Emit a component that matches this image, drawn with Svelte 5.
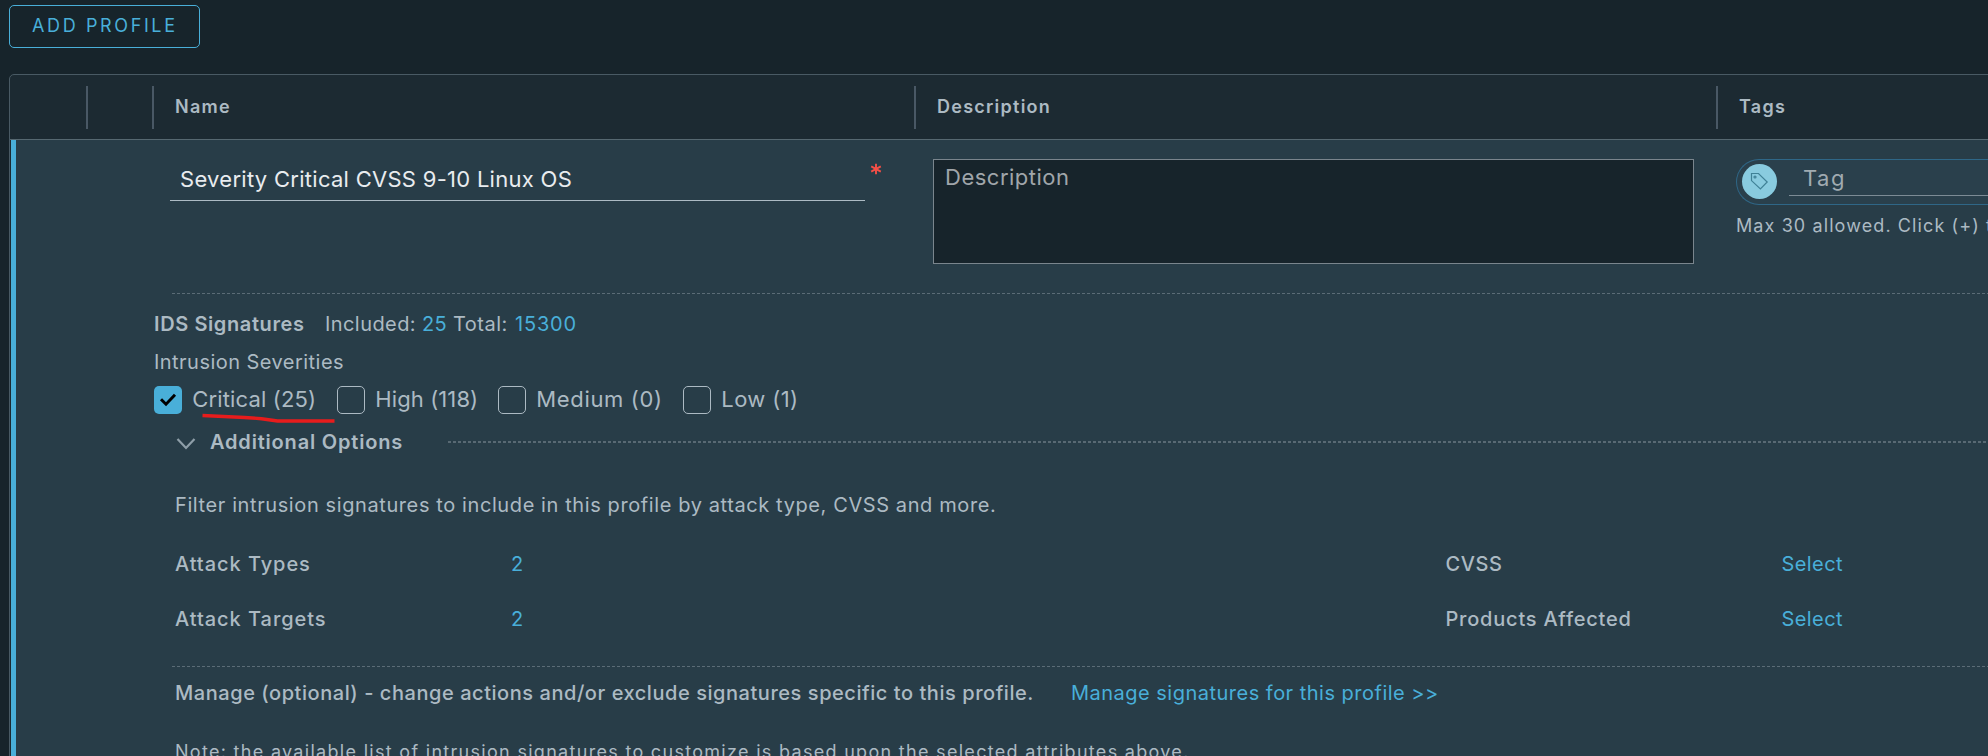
<script>
  const severities = [
    { label: 'Critical (25)', checked: true, width: 183, spacing: 0.15 },
    { label: 'High (118)', checked: false, width: 161, spacing: 0.1 },
    { label: 'Medium (0)', checked: false, width: 185, spacing: 0.65 },
    { label: 'Low (1)', checked: false, width: 160, spacing: 0.4 }
  ];
  const criteria = [
    [{ label: 'Attack Types', value: '2', ls: 0.94 }, { label: 'CVSS', value: 'Select', ls: 0.6 }],
    [{ label: 'Attack Targets', value: '2', ls: 0.96 }, { label: 'Products Affected', value: 'Select', ls: 0.78 }]
  ];
</script>

<main>
  <button class="add">ADD PROFILE</button>

  <section class="grid">
    <header class="head">
      <div class="cell c1"></div>
      <div class="cell c2"></div>
      <div class="cell c3">Name</div>
      <div class="cell c4">Description</div>
      <div class="cell c5">Tags</div>
    </header>

    <div class="row">
      <div class="fields">
        <div class="name-input">Severity Critical CVSS 9-10 Linux OS</div>
        <svg class="star" width="12" height="12" viewBox="0 0 12 12"><path d="M6 .8v10.4M1.2 3.4l9.6 5.2M10.8 3.4L1.2 8.6" /></svg>
        <div class="desc">Description</div>
        <div class="tags">
          <div class="pill">
            <span class="dot">
              <svg width="19" height="19" viewBox="0 0 19 19"><path d="M1.5 1.5h7l8.7 8.5-6.8 7L1.5 8.6z" /><circle cx="5" cy="5" r="1" /></svg>
            </span>
            <span class="tag-input">Tag</span>
          </div>
          <div class="hint">Max 30 allowed. Click (+) t</div>
        </div>
      </div>

      <div class="rule"></div>

      <div class="summary">
        <strong>IDS Signatures</strong>
        <span class="k1">Included:</span><a class="n1">25</a>
        <span class="k2">Total:</span><a class="n2">15300</a>
      </div>
      <div class="sub">Intrusion Severities</div>

      <div class="checks">
        {#each severities as s}
          <label style:width="{s.width}px" style:letter-spacing="{s.spacing}px">
            <span class="box" class:on={s.checked}>
              {#if s.checked}
                <svg width="28" height="28" viewBox="0 0 28 28"><path d="M7 13.2l5 5L21 8.8" /></svg>
              {/if}
            </span>
            {s.label}
          </label>
        {/each}
        <svg class="mark" width="136" height="14" viewBox="0 0 136 14"><path d="M1.500 3.500l42 2 17 1.200 16 2.300h57" /></svg>
      </div>

      <div class="options">
        <svg width="20" height="14" viewBox="0 0 20 14"><path d="M1.500 2l8.500 9 8.500-9" /></svg>
        <strong>Additional Options</strong>
        <i></i>
      </div>

      <p class="filter">Filter intrusion signatures to include in this profile by attack type, CVSS and more.</p>

      <div class="criteria">
        {#each criteria as pair}
          {#each pair as c}
            <span class="label" style:letter-spacing="{c.ls}px">{c.label}</span><a>{c.value}</a>
          {/each}
        {/each}
      </div>

      <div class="rule"></div>

      <div class="manage">
        <span>Manage (optional) - change actions and/or exclude signatures specific to this profile.</span>
        <a>Manage signatures for this profile &gt;&gt;</a>
      </div>
      <p class="note">Note: the available list of intrusion signatures to customize is based upon the selected attributes above.</p>
    </div>
  </section>
</main>

<style>
  :global(body) { background: #17242b; overflow: hidden; }
  main {
    box-sizing: border-box; width: 100vw; height: 756px; overflow: hidden;
    padding: 5px 0 0 9px; background: #17242b; color: #acbac3;
    font-family: Inter, "Liberation Sans", sans-serif; font-size: 20px; white-space: nowrap;
  }
  a { color: #49afd9; }
  p { margin: 0; }
  .add {
    display: block; box-sizing: border-box; width: 191px; height: 43px; margin: 0 0 26px; padding: 0 0 2px 22px;
    border: 1px solid #49afd9; border-radius: 5px; background: none; color: #49afd9;
    font: 400 18px Inter, sans-serif; letter-spacing: 2.62px; text-align: left;
  }
  .grid {
    box-sizing: border-box; width: 1990px; height: 720px;
    border: 1px solid #495a64; border-radius: 5px 0 0 0; background: #1c2a32;
  }
  .head { display: flex; align-items: center; height: 64px; border-bottom: 1px solid #566871; }
  .cell {
    box-sizing: border-box; height: 43px; border-right: 2px solid #495865; padding-left: 21px;
    font-size: 18px; font-weight: 600; line-height: 42px; letter-spacing: 1.25px;
  }
  .c1 { width: 78px; }
  .c2 { width: 66px; }
  .c3 { width: 762px; }
  .c4 { width: 802px; }
  .c5 { width: 270px; border: 0; }
  .row { height: 640px; margin-left: 1px; border-left: 5px solid #49afd9; background: #283d48; }
  .fields { display: flex; align-items: flex-start; height: 153px; box-sizing: border-box; padding: 19px 0 0 154px; }
  .name-input {
    box-sizing: border-box; width: 695px; height: 42px; border-bottom: 1px solid #adbbc4;
    padding-left: 10px; color: #e9ecef; font-size: 22px; line-height: 40px; letter-spacing: .28px;
  }
  .star { margin: 4px 51px 0 5px; fill: none; stroke: #f54f47; stroke-width: 1.9; }
  .desc {
    box-sizing: border-box; width: 761px; height: 105px; padding-left: 11px; border: 1px solid #7a858d;
    background: #17242b; color: #a0a6aa; font-size: 22px; line-height: 34px; letter-spacing: .5px;
  }
  .tags { width: 260px; margin-left: 42px; }
  .pill {
    display: flex; box-sizing: border-box; height: 46px; padding: 4px 0 0 5px;
    border: 1px solid #2f6787; border-right: 0; border-radius: 23px 0 0 23px; background: #2a404c;
  }
  .dot { display: flex; flex: none; align-items: center; justify-content: center; width: 35px; height: 35px; border-radius: 50%; background: #89cbdf; }
  .dot svg { fill: none; stroke: #3f8196; stroke-width: 1.2; }
  .tag-input {
    box-sizing: border-box; width: 220px; height: 32px; margin-left: 12px; padding-left: 14px;
    border-bottom: 1px solid #7c8b95; color: #a0abb1; font-size: 22px; line-height: 28px; letter-spacing: 1.5px;
  }
  .hint { margin-top: 8px; font-size: 18px; line-height: 25px; letter-spacing: 1.1px; }
  .rule { height: 1px; margin-left: 156px; background: repeating-linear-gradient(90deg, #5b6c76 0 3px, transparent 3px 5px); }
  .summary { display: flex; height: 38px; margin-top: 11px; padding-left: 138px; line-height: 38px; }
  .summary strong { width: 171px; font-weight: 600; letter-spacing: .6px; }
  .k1 { width: 97px; letter-spacing: .42px; }
  .n1 { width: 31px; letter-spacing: .4px; }
  .k2 { width: 62px; letter-spacing: .5px; }
  .n2 { letter-spacing: .8px; }
  .sub { height: 38px; padding-left: 138px; line-height: 38px; letter-spacing: .46px; }
  .checks { position: relative; display: flex; height: 28px; margin: 5px 0 0 138px; }
  label { display: flex; font-size: 22px; line-height: 26px; }
  .box { box-sizing: border-box; flex: none; width: 28px; height: 28px; margin-right: 10.3px; border: 1px solid #acbac3; border-radius: 5px; }
  .box.on { border: 0; background: #49afd9; }
  .box svg { display: block; fill: none; stroke: #000; stroke-width: 3; }
  .mark { position: absolute; left: 47px; top: 26px; fill: none; stroke: #e81c1c; stroke-width: 3.4; }
  .options { display: flex; align-items: center; height: 28px; margin: 14px 0 0 160px; line-height: 28px; }
  .options svg { margin-top: 3px; fill: none; stroke: #8e9ea8; stroke-width: 2.2; }
  .options strong { width: 238px; margin-left: 14px; font-weight: 600; letter-spacing: .81px; }
  .options i { flex: 1; height: 2px; background: repeating-linear-gradient(90deg, #586973 0 3px, transparent 3px 5px); }
  .filter { height: 30px; margin-top: 34px; padding-left: 159px; line-height: 30px; letter-spacing: .6px; }
  .criteria {
    display: grid; grid-template-columns: 336px 934.5px 336px 200px; grid-auto-rows: 55px;
    margin-top: 17px; padding-left: 159px; line-height: 55px;
  }
  .criteria a { letter-spacing: .42px; }
  .label { font-weight: 500; }
  .criteria + .rule { margin-top: 19px; }
  .manage { display: flex; height: 40px; margin-top: 6px; padding-left: 159px; line-height: 40px; }
  .manage span { width: 896px; font-weight: 500; letter-spacing: .55px; }
  .manage a { letter-spacing: .49px; }
  .note { margin-top: 24px; padding-left: 159px; font-size: 18px; line-height: 30px; letter-spacing: 1.3px; }
</style>
